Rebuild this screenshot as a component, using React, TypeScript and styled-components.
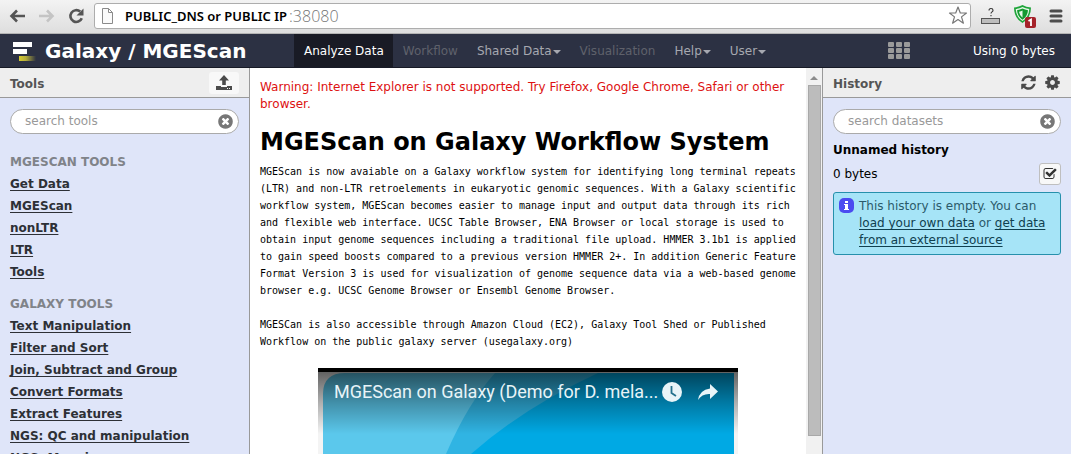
import React from "react";
import styled, { createGlobalStyle } from "styled-components";

const GlobalStyle = createGlobalStyle`
  *, *::before, *::after { box-sizing: border-box; }
  body { margin: 0; background: #fff; }
  button, input { font: inherit; }
  svg { flex: none; }
`;

const Page = styled.div`
  display: flex;
  flex-direction: column;
  height: 100vh;
  overflow: hidden;
  font: 12px/17px "DejaVu Sans", sans-serif;
  color: #000;
`;

/* Browser bar */

const BrowserBar = styled.div`
  display: flex;
  align-items: center;
  flex: none;
  height: 34px;
  padding: 0 8px 2px;
  background: linear-gradient(#f3f3f3, #dedede);
  border-bottom: 1px solid #b4b4b4;
`;

const BarButton = styled.button`
  display: flex;
  flex: none;
  margin: 0;
  padding: 0;
  border: 0;
  background: none;
`;

const NavButtons = styled.div`
  display: flex;
  align-items: center;
  gap: 12px;
  width: 86px;
`;

const AddressBox = styled.div`
  display: flex;
  align-items: center;
  flex: 1;
  height: 26px;
  padding: 0 2px 0 6px;
  background: #fff;
  border: 1px solid #adadad;
  border-radius: 3px;
`;

const AddressLabel = styled.label`
  margin: 0 2px 0 11px;
  font: 600 13px/20px "Noto Sans", sans-serif;
  white-space: nowrap;
`;

const AddressInput = styled.input`
  flex: 1;
  min-width: 0;
  padding: 0;
  border: 0;
  outline: 0;
  background: none;
  color: #757575;
  font: 300 16px/20px "Open Sans", sans-serif;
`;

const Extensions = styled.div`
  display: flex;
  align-items: center;
  gap: 12px;
  margin-left: 10px;
`;

/* Masthead */

const Masthead = styled.header`
  display: flex;
  flex: none;
  height: 34px;
  background: #2c3143;
  border-bottom: 1px solid #171a26;
  color: #fff;
`;

const Brand = styled.a`
  display: flex;
  align-items: center;
  width: 294px;
  padding-left: 12px;
  gap: 8px;
  color: #fff;
  font-size: 20px;
  font-weight: bold;
  line-height: 32px;
  text-decoration: none;
  white-space: nowrap;
`;

const Menu = styled.nav`
  display: flex;
  flex: 1;
`;

const MenuLink = styled.a<{ $state?: "active" | "disabled" }>`
  display: flex;
  align-items: center;
  padding: 1px 9px 0 10px;
  white-space: nowrap;
  text-decoration: none;
  background: ${(p) => (p.$state === "active" ? "#191b25" : "none")};
  color: ${(p) =>
    p.$state === "active" ? "#fff" : p.$state === "disabled" ? "#5f616b" : "#a6a8b0"};
`;

const Caret = styled.span`
  margin: 2px 0 0 1px;
  border: 4px solid transparent;
  border-top-color: currentColor;
  border-bottom: 0;
`;

const GridButton = styled(BarButton)`
  align-self: center;
`;

const Usage = styled.div`
  width: 161px;
  padding-right: 16px;
  line-height: 34px;
  text-align: right;
`;

/* Columns */

const Columns = styled.div`
  display: flex;
  flex: 1;
  min-height: 0;
`;

const SidePanel = styled.aside<{ $side: "left" | "right" }>`
  flex: none;
  width: ${(p) => (p.$side === "left" ? 250 : 249)}px;
  overflow: hidden;
  background: #dfe5f9;
  border: 0 solid #999;
  border-width: ${(p) => (p.$side === "left" ? "0 1px 0 0" : "0 0 0 1px")};
`;

const PanelHeader = styled.div`
  display: flex;
  align-items: center;
  height: 30px;
  padding: 0 10px;
  background: #eee;
  border-bottom: 1px solid #999;
`;

const PanelTitle = styled.h2`
  flex: 1;
  margin: 0;
  padding-top: 4px;
  color: #555;
  font-size: 12px;
`;

const HeaderButtons = styled.div`
  display: flex;
  gap: 7px;
`;

const UploadButton = styled(BarButton)`
  align-items: center;
  justify-content: center;
  width: 30px;
  height: 22px;
  background: #f8f8f8;
  border-radius: 3px;
`;

const PanelBody = styled.div`
  padding: 11px 10px 0;
`;

const SearchBox = styled.div`
  display: flex;
  align-items: center;
  height: 25px;
  padding: 0 4px 0 14px;
  background: #fff;
  border: 1px solid #aaa;
  border-radius: 13px;
`;

const SearchInput = styled.input`
  flex: 1;
  min-width: 0;
  padding: 0;
  border: 0;
  outline: 0;
  background: none;
  &::placeholder { color: #999; opacity: 1; }
`;

const ToolSection = styled.section`
  margin-top: 17px;
  & + & { margin-top: 10px; }
`;

const SectionTitle = styled.h3`
  margin: 0;
  color: #808389;
  font-size: 12px;
  line-height: 22px;
`;

const ToolList = styled.ul`
  margin: 0;
  padding: 0;
  list-style: none;
`;

const ToolItem = styled.li`
  line-height: 22px;
  white-space: nowrap;
`;

const ToolLink = styled.a`
  color: #2d3036;
  font-weight: bold;
  text-underline-offset: 2px;
`;

/* Centre */

const Center = styled.main`
  flex: 1;
  min-width: 0;
  padding: 11px 10px 0;
  overflow: hidden;
`;

const Warning = styled.p`
  margin: 0;
  color: #d11;
`;

const Heading = styled.h1`
  margin: 12px 0 4px;
  font-size: 24px;
  line-height: 34px;
  white-space: nowrap;
`;

const Copy = styled.p`
  margin: 0 0 17px;
  font: 10px/17px "DejaVu Sans Mono", monospace;
`;

const Video = styled.div`
  display: grid;
  width: 420px;
  height: 236px;
  margin: 18px auto 0;
  background: #000;
  & > * { grid-area: 1 / 1; }
`;

const VideoBar = styled.div`
  display: flex;
  align-items: center;
  align-self: start;
  height: 48px;
  padding: 0 19px 0 16px;
  color: #e8f4f8;
`;

const VideoTitle = styled.a`
  flex: 1;
  color: inherit;
  font: 18px/24px Roboto, sans-serif;
  text-decoration: none;
  white-space: nowrap;
`;

const VideoActions = styled.div`
  display: flex;
  align-items: center;
  gap: 14px;
`;

const Scrollbar = styled.div`
  display: flex;
  flex-direction: column;
  align-items: center;
  flex: none;
  width: 16px;
  background: #f1f1f1;
`;

const ScrollUp = styled.span`
  margin: 8px 0 5px;
  border: 4px solid transparent;
  border-bottom-color: #8c8c8c;
  border-top: 0;
`;

const ScrollThumb = styled.span`
  width: 13px;
  height: 351px;
  background: #bcbcbc;
  border: 1px solid #a8a8a8;
`;

/* History */

const HistoryName = styled.h3`
  margin: 8px 0 0;
  font-size: 12px;
  line-height: 17px;
`;

const HistoryRow = styled.div`
  display: flex;
  align-items: center;
  justify-content: space-between;
  margin: 4px 0 7px;
`;

const SelectButton = styled.button`
  display: flex;
  align-items: center;
  justify-content: center;
  width: 22px;
  height: 22px;
  padding: 0;
  background: #f8f8f8;
  border: 1px solid #bfbfbf;
  border-radius: 3px;
`;

const InfoBox = styled.div`
  display: flex;
  gap: 5px;
  padding: 5px 4px 5px 5px;
  background: #a6e4f7;
  border: 1px solid #2690ac;
  border-radius: 3px;
  color: #2b5a6a;
`;

const InfoText = styled.p`
  margin: 0;
`;

const InfoLink = styled.a`
  color: #10404f;
  text-underline-offset: 2px;
`;

const Glyph = ({ d, size, color }: { d: string; size: number; color: string }) => (
  <svg width={size} height={size} viewBox="0 0 1792 1792" fill={color} aria-hidden>
    <path d={d} />
  </svg>
);

const CLEAR =
  "M1277 1122q0-26-19-45l-181-181 181-181q19-19 19-45 0-27-19-46l-90-90q-19-19-46-19-26 0-45 19l-181 181-181-181q-19-19-45-19-27 0-46 19l-90 90q-19 19-19 46 0 26 19 45l181 181-181 181q-19 19-19 45 0 27 19 46l90 90q19 19 46 19 26 0 45-19l181-181 181 181q19 19 45 19 27 0 46-19l90-90q19-19 19-46zm387-226q0 209-103 385.5t-279.5 279.5-385.5 103-385.5-103-279.5-279.5-103-385.5 103-385.5 279.5-279.5 385.5-103 385.5 103 279.5 279.5 103 385.5z";
const REFRESH =
  "M1639 1056q0 5-1 7-64 268-268 434.5t-478 166.5q-146 0-282.5-55t-243.5-157l-129 129q-19 19-45 19t-45-19-19-45v-448q0-26 19-45t45-19h448q26 0 45 19t19 45-19 45l-137 137q71 66 161 102t187 36q134 0 250-65t186-179q11-17 53-117 8-23 30-23h192q13 0 22.5 9.5t9.5 22.5zm25-800v448q0 26-19 45t-45 19h-448q-26 0-45-19t-19-45 19-45l138-138q-148-137-349-137-134 0-250 65t-186 179q-11 17-53 117-8 23-30 23h-199q-13 0-22.5-9.5t-9.5-22.5v-7q65-268 270-434.5t480-166.5q146 0 284 55.5t245 156.5l130-129q19-19 45-19t45 19 19 45z";
const COG =
  "M1152 896q0-106-75-181t-181-75-181 75-75 181 75 181 181 75 181-75 75-181zm512-109v222q0 12-8 23t-20 13l-185 28q-19 54-39 91 35 50 107 138 10 12 10 25t-9 23q-27 37-99 108t-94 71q-12 0-26-9l-138-108q-44 23-91 38-16 136-29 186-7 28-36 28h-222q-14 0-24.5-8.5t-11.5-21.5l-28-184q-49-16-90-37l-141 107q-10 9-25 9-14 0-25-11-126-114-165-168-7-10-7-23 0-12 8-23 15-21 51-66.5t54-70.5q-27-50-41-99l-183-27q-13-2-21-12.5t-8-23.5v-222q0-12 8-23t19-13l186-28q14-46 39-92-40-57-107-138-10-12-10-24 0-10 9-23 26-36 98.5-107.5t94.5-71.5q13 0 26 10l138 107q44-23 91-38 16-136 29-186 7-28 36-28h222q14 0 24.5 8.5t11.5 21.5l28 184q49 16 90 37l142-107q9-9 24-9 13 0 25 10 129 119 165 170 7 8 7 22 0 12-8 23-15 21-51 66.5t-54 70.5q26 50 41 98l183 28q13 2 21 12.5t8 23.5z";
const CHECK =
  "M1472 930v318q0 119-84.5 203.5t-203.5 84.5h-832q-119 0-203.5-84.5t-84.5-203.5v-832q0-119 84.5-203.5t203.5-84.5h832q63 0 117 25 15 7 18 23 3 17-9 29l-49 49q-10 10-23 10-3 0-9-2-23-6-45-6h-832q-66 0-113 47t-47 113v832q0 66 47 113t113 47h832q66 0 113-47t47-113v-254q0-13 9-22l64-64q10-10 23-10 6 0 12 3 20 8 20 29zm231-489l-814 814q-24 24-57 24t-57-24l-430-430q-24-24-24-57t24-57l110-110q24-24 57-24t57 24l263 263 647-647q24-24 57-24t57 24l110 110q24 24 24 57t-24 57z";

const sections = [
  { title: "MGESCAN TOOLS", tools: ["Get Data", "MGEScan", "nonLTR", "LTR", "Tools"] },
  {
    title: "GALAXY TOOLS",
    tools: [
      "Text Manipulation",
      "Filter and Sort",
      "Join, Subtract and Group",
      "Convert Formats",
      "Extract Features",
      "NGS: QC and manipulation",
      "NGS: Mapping",
    ],
  },
];

const menu: { label: string; state?: "active" | "disabled"; caret?: boolean }[] = [
  { label: "Analyze Data", state: "active" },
  { label: "Workflow", state: "disabled" },
  { label: "Shared Data", caret: true },
  { label: "Visualization", state: "disabled" },
  { label: "Help", caret: true },
  { label: "User", caret: true },
];

const Search = ({ label }: { label: string }) => (
  <SearchBox>
    <SearchInput type="text" placeholder={label} aria-label={label} />
    <BarButton aria-label="Clear search">
      <Glyph d={CLEAR} size={17} color="#777" />
    </BarButton>
  </SearchBox>
);

const Browser = () => (
  <BrowserBar>
    <NavButtons>
      <BarButton aria-label="Back">
        <svg width="18" height="14" viewBox="0 0 18 14" fill="none" stroke="#555" strokeWidth="2.6">
          <path d="M17 7H4M9 1.500L3.500 7L9 12.500" />
        </svg>
      </BarButton>
      <BarButton aria-label="Forward">
        <svg width="18" height="14" viewBox="0 0 18 14" fill="none" stroke="#c4c4c4" strokeWidth="2.600">
          <path d="M1 7h13M9 1.500L14.500 7L9 12.500" />
        </svg>
      </BarButton>
      <BarButton aria-label="Reload">
        <svg width="17" height="16" viewBox="0 0 17 16">
          <path d="M13.800 10.200A5.900 5.900 0 1 1 12.200 3.600" fill="none" stroke="#555" strokeWidth="2.600" />
          <path d="M15.500 0.500v7h-7z" fill="#555" />
        </svg>
      </BarButton>
    </NavButtons>
    <AddressBox>
      <svg width="13" height="16" viewBox="0 0 13 16" fill="#fafafa" stroke="#8a8a8a" aria-hidden>
        <path d="M1.500 0.500h6l4 4v11h-10zM7.500 0.500v4h4" />
      </svg>
      <AddressLabel htmlFor="address">PUBLIC_DNS or PUBLIC IP</AddressLabel>
      <AddressInput id="address" defaultValue=":38080" />
      <BarButton aria-label="Bookmark">
        <svg width="20" height="19" viewBox="0 0 20 19" fill="#fff" stroke="#777" strokeWidth="1.200" strokeLinejoin="round">
          <path d="M10 1l2.300 6h6.200l-5 3.900 1.900 6.300L10 13.500l-5.400 3.700 1.900-6.300-5-3.900h6.200z" />
        </svg>
      </BarButton>
    </AddressBox>
    <Extensions>
      <BarButton aria-label="Unknown extension">
        <svg width="20" height="18" viewBox="0 0 20 18">
          <path d="M8 3.500q0-2 2-2t2 1.700q0 1-1 1.700t-1 1.600M10 8v1.200" fill="none" stroke="#333" strokeWidth="1.100" />
          <rect x="0.500" y="11.500" width="18" height="5" fill="#bdbdbd" stroke="#555" />
        </svg>
      </BarButton>
      <BarButton aria-label="Shield, 1 alert">
        <svg width="24" height="24" viewBox="0 0 24 24">
          <path d="M9.500 1Q13 3 18 3.500Q18 14 9.500 19Q1 14 1 3.500Q6 3 9.500 1z" fill="#1fa53a" />
          <path d="M9.500 3Q12.500 4.700 16.300 5Q15.800 13 9.500 17Q3.200 13 2.700 5Q6.500 4.700 9.500 3z" fill="#e6f8e8" />
          <path d="M9.500 4.500Q12 5.800 15 6.300Q14.500 12.500 9.500 15.700Q4.500 12.500 4 6.300Q7 5.800 9.500 4.500z" fill="#149a30" />
          <path d="M9.500 6.500Q8 7.300 6 7.700Q6.500 11.500 9.500 13.700z" fill="#e6f8e8" />
          <rect x="12" y="13" width="11" height="11" rx="2" fill="#a5222a" />
          <path d="M15.500 17l2.500-1.500V22" fill="none" stroke="#fff" strokeWidth="1.800" />
        </svg>
      </BarButton>
      <BarButton aria-label="Browser menu">
        <svg width="14" height="14" viewBox="0 0 14 14" stroke="#4d4d4d" strokeWidth="3" strokeLinecap="round">
          <path d="M2 2h10M2 7h10M2 12h10" />
        </svg>
      </BarButton>
    </Extensions>
  </BrowserBar>
);

export default function App() {
  return (
    <Page>
      <GlobalStyle />
      <Browser />
      <Masthead>
        <Brand href="#">
          <svg width="25" height="22" viewBox="0 0 25 22" aria-hidden>
            <defs>
              <linearGradient id="gold">
                <stop offset="0" stopColor="#d6cb2e" />
                <stop offset="0.400" stopColor="#b5ad3b" />
                <stop offset="1" stopColor="#2c3143" />
              </linearGradient>
            </defs>
            <path d="M1 2h19v5H1zM1 9h14v5H1z" fill="#fff" />
            <path d="M7 16h17v5H7z" fill="url(#gold)" />
          </svg>
          Galaxy / MGEScan
        </Brand>
        <Menu>
          {menu.map((m) => (
            <MenuLink key={m.label} href="#" $state={m.state}>
              {m.label}
              {m.caret && <Caret />}
            </MenuLink>
          ))}
        </Menu>
        <GridButton aria-label="Applications">
          <svg width="22" height="18" viewBox="0 0 22 18" fill="#9a9a9a">
            {[0, 6, 12].map((y) =>
              [0, 8, 16].map((x) => <rect key={`${x}-${y}`} x={x} y={y} width="6" height="5" rx="1" />)
            )}
          </svg>
        </GridButton>
        <Usage>Using 0 bytes</Usage>
      </Masthead>
      <Columns>
        <SidePanel $side="left">
          <PanelHeader>
            <PanelTitle>Tools</PanelTitle>
            <UploadButton aria-label="Upload data">
              <svg width="16" height="16" viewBox="0 0 16 16" fill="#4a4a4a">
                <path d="M8 0l5 5.500H9.800V10H6.200V5.500H3z" />
                <path d="M0 11h5v1h6v-1h5v4H0zM11 13v1h1v-1zM13 13v1h1v-1z" fillRule="evenodd" />
              </svg>
            </UploadButton>
          </PanelHeader>
          <PanelBody>
            <Search label="search tools" />
            {sections.map((s) => (
              <ToolSection key={s.title}>
                <SectionTitle>{s.title}</SectionTitle>
                <ToolList>
                  {s.tools.map((t) => (
                    <ToolItem key={t}>
                      <ToolLink href="#">{t}</ToolLink>
                    </ToolItem>
                  ))}
                </ToolList>
              </ToolSection>
            ))}
          </PanelBody>
        </SidePanel>
        <Center>
          <Warning>
            Warning: Internet Explorer is not supported. Try Firefox, Google Chrome, Safari or other browser.
          </Warning>
          <Heading>MGEScan on Galaxy Workflow System</Heading>
          <Copy>
            MGEScan is now avaiable on a Galaxy workflow system for identifying long terminal repeats (LTR) and
            non-LTR retroelements in eukaryotic genomic sequences. With a Galaxy scientific workflow system, MGEScan
            becomes easier to manage input and output data through its rich and flexible web interface. UCSC Table
            Browser, ENA Browser or local storage is used to obtain input genome sequences including a traditional
            file upload. HMMER 3.1b1 is applied to gain speed boosts compared to a previous version HMMER 2+. In
            addition Generic Feature Format Version 3 is used for visualization of genome sequence data via a
            web-based genome browser e.g. UCSC Genome Browser or Ensembl Genome Browser.
          </Copy>
          <Copy>
            MGESCan is also accessible through Amazon Cloud (EC2), Galaxy Tool Shed or Published Workflow on the
            public galaxy server (usegalaxy.org)
          </Copy>
          <Video>
            <svg width="420" height="236" viewBox="0 0 420 236" aria-hidden>
              <defs>
                <linearGradient id="shade" x2="0" y2="1">
                  <stop offset="0" stopColor="#000" stopOpacity="0.600" />
                  <stop offset="0.500" stopColor="#000" stopOpacity="0.280" />
                  <stop offset="1" stopColor="#000" stopOpacity="0" />
                </linearGradient>
              </defs>
              <rect y="4" width="420" height="232" fill="#f4f4f4" />
              <path d="M5 236V26Q5 5 27 5H416V236z" fill="#5bc8ec" />
              <path d="M177 5H416V236H90Q90 180 128 86Q150 35 177 5z" fill="#30b4e3" />
              <path d="M280 5H416V236H90Q90 150 153 86Q205 40 280 5z" fill="#00a9e4" />
              <rect y="4" width="420" height="62" fill="url(#shade)" />
            </svg>
            <VideoBar>
              <VideoTitle href="#">MGEScan on Galaxy (Demo for D. mela...</VideoTitle>
              <VideoActions>
                <BarButton aria-label="Watch later">
                  <svg width="22" height="22" viewBox="0 0 22 22">
                    <circle cx="11" cy="11" r="10" fill="#e8f4f8" />
                    <path d="M10.500 5v7l4.500 3" fill="none" stroke="#24708c" strokeWidth="1.800" />
                  </svg>
                </BarButton>
                <BarButton aria-label="Share">
                  <svg width="22" height="18" viewBox="0 0 22 18" fill="#e8f4f8">
                    <path d="M13 1l8 7.500-8 7.500v-5Q5 10.500 1 17Q2.500 7 13 5.500z" />
                  </svg>
                </BarButton>
              </VideoActions>
            </VideoBar>
          </Video>
        </Center>
        <Scrollbar aria-hidden>
          <ScrollUp />
          <ScrollThumb />
        </Scrollbar>
        <SidePanel $side="right">
          <PanelHeader>
            <PanelTitle>History</PanelTitle>
            <HeaderButtons>
              <BarButton aria-label="Refresh history">
                <Glyph d={REFRESH} size={17} color="#4a4a4a" />
              </BarButton>
              <BarButton aria-label="History options">
                <Glyph d={COG} size={17} color="#4a4a4a" />
              </BarButton>
            </HeaderButtons>
          </PanelHeader>
          <PanelBody>
            <Search label="search datasets" />
            <HistoryName>Unnamed history</HistoryName>
            <HistoryRow>
              0 bytes
              <SelectButton aria-label="Operations on multiple datasets">
                <Glyph d={CHECK} size={14} color="#333" />
              </SelectButton>
            </HistoryRow>
            <InfoBox>
              <svg width="15" height="16" viewBox="0 0 15 16" aria-hidden>
                <rect y="0" width="15" height="15" rx="5" fill="#4b4bf0" />
                <path d="M6 3h3v2H6zM5 6h4v5h1v1H5v-1h1V7H5z" fill="#fff" />
              </svg>
              <InfoText>
                This history is empty. You can <InfoLink href="#">load your own data</InfoLink> or{" "}
                <InfoLink href="#">get data from an external source</InfoLink>
              </InfoText>
            </InfoBox>
          </PanelBody>
        </SidePanel>
      </Columns>
    </Page>
  );
}
